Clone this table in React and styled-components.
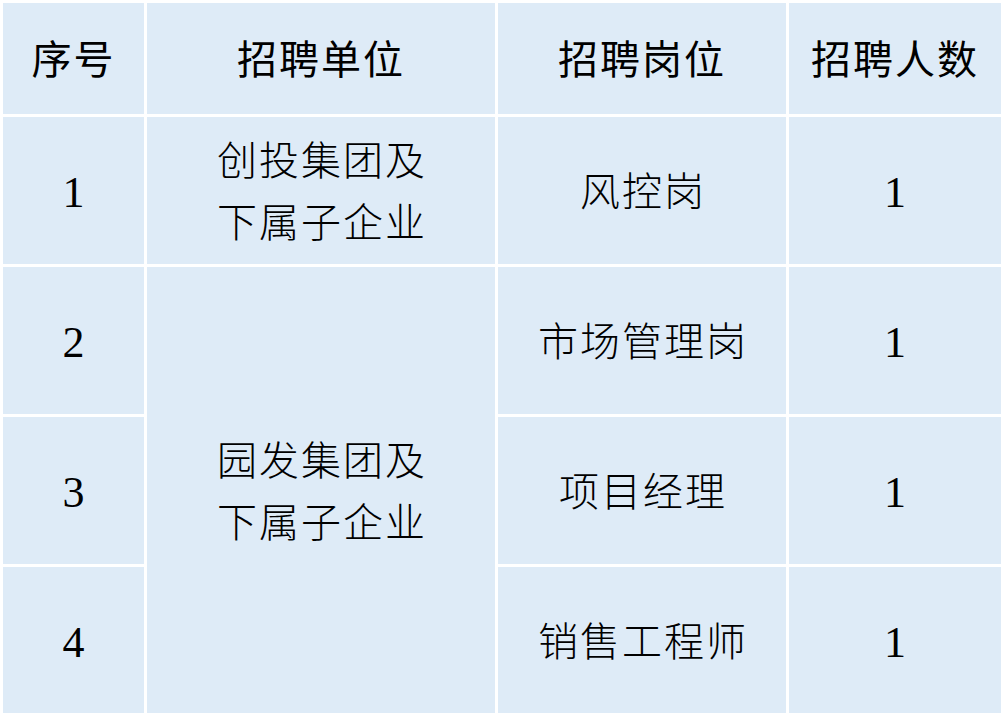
import React from "react";
import styled, { createGlobalStyle } from "styled-components";

const GlobalStyle = createGlobalStyle`
  html, body {
    margin: 0;
    padding: 0;
    background: #ffffff;
  }
`;

const rows = [
  { no: "1", unit: ["创投集团及", "下属子企业"], post: "风控岗", count: "1" },
  { no: "2", unit: ["园发集团及", "下属子企业"], post: "市场管理岗", count: "1" },
  { no: "3", post: "项目经理", count: "1" },
  { no: "4", post: "销售工程师", count: "1" },
];

const Table = styled.div`
  display: grid;
  grid-template-columns: 141px 348px 288px 212px;
  grid-template-rows: 111px 147px 147px 147px 146px;
  gap: 3px;
  padding: 3px;
  width: 1004px;
  height: 716px;
  box-sizing: border-box;
  background: #ffffff;
`;

const Cell = styled.div`
  background: #deebf7;
  display: flex;
  flex-direction: column;
  align-items: center;
  justify-content: center;
  box-sizing: border-box;
  padding-top: 5px;
  color: #000;
  font-family: "Liberation Serif", "Noto Sans CJK SC", serif;
  font-size: ${(p) => (p.$num ? "44px" : "40px")};
  font-weight: ${(p) => (p.$head ? 400 : 300)};
  letter-spacing: ${(p) => (p.$num ? "0" : "2px")};
  line-height: 62px;
  grid-column: ${(p) => p.$col || "auto"};
  grid-row: ${(p) => p.$row || "auto"};
  white-space: nowrap;
`;

const Line = styled.span`
  display: block;
  margin-right: -2px;
`;

export default function App() {
  return (
    <>
      <GlobalStyle />
      <Table>
        <Cell $head>序号</Cell>
        <Cell $head>招聘单位</Cell>
        <Cell $head>招聘岗位</Cell>
        <Cell $head>招聘人数</Cell>
        {rows.map((r, i) => (
          <React.Fragment key={r.no}>
            <Cell $num $col="1" $row={`${i + 2}`}>{r.no}</Cell>
            {r.unit && (
              <Cell $col="2" $row={i === 0 ? "2" : "3 / 6"}>
                {r.unit.map((l) => (
                  <Line key={l}>{l}</Line>
                ))}
              </Cell>
            )}
            <Cell $col="3" $row={`${i + 2}`}>
              <Line>{r.post}</Line>
            </Cell>
            <Cell $num $col="4" $row={`${i + 2}`}>{r.count}</Cell>
          </React.Fragment>
        ))}
      </Table>
    </>
  );
}
